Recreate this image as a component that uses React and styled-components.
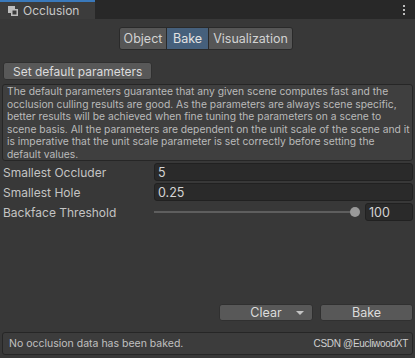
import styled, { createGlobalStyle } from "styled-components";

const Global = createGlobalStyle`
  html, body {
    margin: 0;
    padding: 0;
    background: #383838;
  }
  body {
    font-family: Inter, "Noto Sans", "Liberation Sans", sans-serif;
  }
`;

const Window = styled.div`
  width: 415px;
  height: 358px;
  background: #383838;
  display: flex;
  flex-direction: column;
  color: #c4c4c4;
  overflow: hidden;
`;

const TabBar = styled.div`
  height: 19px;
  background: #282828;
  display: flex;
  align-items: stretch;
  justify-content: space-between;
`;

const Tab = styled.div`
  width: 95px;
  box-sizing: border-box;
  background: #3c3c3c;
  border-top: 2px solid #3a79bb;
  display: flex;
  align-items: center;
  gap: 5px;
  padding-left: 8px;
  font-size: 12px;
  color: #c8c8c8;
`;

const Kebab = styled.div`
  display: flex;
  flex-direction: column;
  justify-content: center;
  gap: 2px;
  padding-right: 10px;
  & > span {
    width: 2px;
    height: 2px;
    background: #bdbdbd;
  }
`;

const Body = styled.div`
  flex: 1;
  display: flex;
  flex-direction: column;
  padding: 0 2px 3px 2px;
`;

const Toolbar = styled.div`
  margin-top: 8px;
  align-self: flex-start;
  margin-left: 117px;
  display: flex;
  border: 1px solid #2a2a2a;
  border-radius: 3px;
  overflow: hidden;
`;

const Seg = styled.div`
  box-sizing: border-box;
  width: ${(p) => p.$w}px;
  height: 21px;
  display: flex;
  align-items: center;
  justify-content: center;
  font-size: 12.5px;
  white-space: nowrap;
  color: ${(p) => (p.$active ? "#e2e2e2" : "#d2d2d2")};
  background: ${(p) => (p.$active ? "#46607c" : "#565656")};
  & + & {
    border-left: 1px solid #2a2a2a;
  }
`;

const Button = styled.div`
  box-sizing: border-box;
  height: ${(p) => p.$h || 18}px;
  width: ${(p) => p.$w}px;
  background: #585858;
  border: 1px solid #303030;
  border-radius: 3px;
  display: flex;
  align-items: center;
  justify-content: center;
  font-size: 12.5px;
  white-space: nowrap;
  color: #dcdcdc;
  position: relative;
`;

const DefaultButton = styled(Button)`
  margin-top: 12px;
  margin-left: 1px;
  justify-content: flex-start;
  padding-left: 9px;
  font-size: 12px;
`;

const HelpBox = styled.div`
  margin-top: 4px;
  box-sizing: border-box;
  background: #3f3f3f;
  border: 1px solid #262626;
  border-radius: 3px;
  padding: 0 4px;
  font-size: 10.3px;
  line-height: 12.5px;
  color: #bababa;
  white-space: nowrap;
  overflow: hidden;
`;

const Rows = styled.div`
  margin-top: 2px;
  display: flex;
  flex-direction: column;
  gap: 2px;
`;

const Row = styled.div`
  display: flex;
  align-items: center;
  height: 18px;
`;

const Label = styled.div`
  width: 151px;
  padding-left: 1px;
  font-size: 12px;
  color: #c4c4c4;
`;

const Field = styled.div`
  flex: ${(p) => (p.$w ? "none" : 1)};
  width: ${(p) => (p.$w ? `${p.$w}px` : "auto")};
  box-sizing: border-box;
  height: 18px;
  background: #2a2a2a;
  border: 1px solid #212121;
  border-radius: 3px;
  display: flex;
  align-items: center;
  padding-left: 3px;
  font-size: 12.5px;
  color: #d4d4d4;
`;

const Slider = styled.div`
  flex: 1;
  height: 18px;
  position: relative;
  margin-right: 10px;
  display: flex;
  align-items: center;
`;

const Track = styled.div`
  flex: 1;
  height: 2px;
  background: #5e5e5e;
`;

const Thumb = styled.div`
  position: absolute;
  right: -5px;
  top: 4px;
  width: 10px;
  height: 10px;
  border-radius: 50%;
  background: #999999;
`;

const Spacer = styled.div`
  flex: 1;
`;

const Actions = styled.div`
  display: flex;
  justify-content: flex-end;
  gap: 7px;
`;

const Caret = styled.span`
  position: absolute;
  right: 8px;
  top: 6px;
  width: 0;
  height: 0;
  border-left: 4px solid transparent;
  border-right: 4px solid transparent;
  border-top: 4px solid #c4c4c4;
`;

const Status = styled.div`
  margin-top: 11px;
  box-sizing: border-box;
  height: 23px;
  background: #3c3c3c;
  border: 1px solid #262626;
  border-radius: 3px;
  display: flex;
  align-items: center;
  justify-content: space-between;
  padding: 0 4px 0 6px;
  font-size: 10.5px;
  color: #c0c0c0;
`;

const Watermark = styled.span`
  font-family: "Liberation Sans", Arial, sans-serif;
  font-size: 10px;
  color: #d0d0d0;
  letter-spacing: -0.3px;
`;

const OcclusionIcon = () => (
  <svg width="10" height="10" viewBox="0 0 10 10">
    <rect x="0" y="0" width="7" height="7" fill="#bdbdbd" />
    <rect x="3" y="3" width="7" height="7" fill="#bdbdbd" />
    <rect x="4.5" y="4.5" width="4" height="4" fill="#3c3c3c" />
  </svg>
);

const helpLines = [
  "The default parameters guarantee that any given scene computes fast and the",
  "occlusion culling results are good. As the parameters are always scene specific,",
  "better results will be achieved when fine tuning the parameters on a scene to",
  "scene basis. All the parameters are dependent on the unit scale of the scene and it",
  "is imperative that the unit scale parameter is set correctly before setting the",
  "default values.",
];

const App = () => {
  return (
    <Window>
      <Global />
      <TabBar>
        <Tab>
          <OcclusionIcon />
          Occlusion
        </Tab>
        <Kebab>
          <span />
          <span />
          <span />
        </Kebab>
      </TabBar>
      <Body>
        <Toolbar>
          <Seg $w={46}>Object</Seg>
          <Seg $w={42} $active>Bake</Seg>
          <Seg $w={84}>Visualization</Seg>
        </Toolbar>
        <DefaultButton $w={149}>Set default parameters</DefaultButton>
        <HelpBox>
          {helpLines.map((line) => (
            <div key={line}>{line}</div>
          ))}
        </HelpBox>
        <Rows>
          <Row>
            <Label>Smallest Occluder</Label>
            <Field>5</Field>
          </Row>
          <Row>
            <Label>Smallest Hole</Label>
            <Field>0.25</Field>
          </Row>
          <Row>
            <Label>Backface Threshold</Label>
            <Slider>
              <Track />
              <Thumb />
            </Slider>
            <Field $w={48}>100</Field>
          </Row>
        </Rows>
        <Spacer />
        <Actions>
          <Button $w={94} $h={17}>
            Clear
            <Caret />
          </Button>
          <Button $w={93} $h={17}>Bake</Button>
        </Actions>
        <Status>
          No occlusion data has been baked.
          <Watermark>CSDN @EucliwoodXT</Watermark>
        </Status>
      </Body>
    </Window>
  );
};

export default App;
